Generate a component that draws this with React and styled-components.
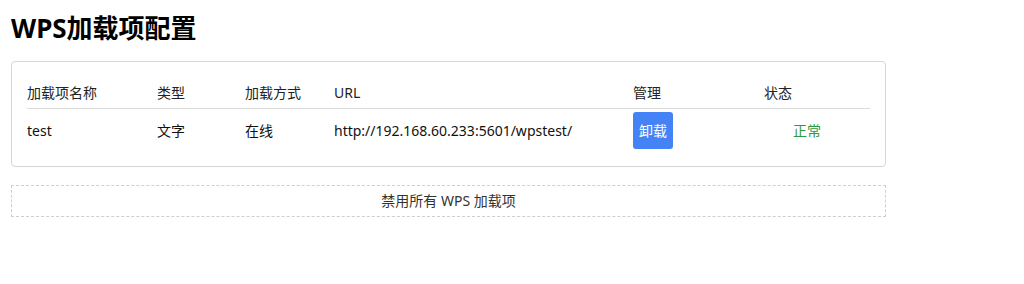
import React from "react";
import styled, { createGlobalStyle } from "styled-components";

const GlobalStyle = createGlobalStyle`
  body {
    margin: 0;
    background: #fff;
    color: #222;
    font-family: "Noto Sans", "Noto Sans CJK SC", sans-serif;
  }
`;

const columns = "130px 88px 89px 299px 131px 106px";

const addins = [
  { name: "test", type: "文字", mode: "在线", url: "http://192.168.60.233:5601/wpstest/", status: "正常" },
];

const Page = () => {
  return (
    <Wrapper>
      <GlobalStyle />
      <Title>WPS加载项配置</Title>
      <Card>
        <HeadRow>
          <HeadCell>加载项名称</HeadCell>
          <HeadCell>类型</HeadCell>
          <HeadCell>加载方式</HeadCell>
          <HeadCell>URL</HeadCell>
          <HeadCell>管理</HeadCell>
          <HeadCell>状态</HeadCell>
        </HeadRow>
        {addins.map((a) => (
          <BodyRow key={a.name}>
            <Cell>{a.name}</Cell>
            <Cell>{a.type}</Cell>
            <Cell>{a.mode}</Cell>
            <Cell>{a.url}</Cell>
            <Cell>
              <UnloadButton type="button">卸载</UnloadButton>
            </Cell>
            <Cell $status>{a.status}</Cell>
          </BodyRow>
        ))}
      </Card>
      <DisableAll type="button">禁用所有 WPS 加载项</DisableAll>
    </Wrapper>
  );
};

export default Page;

const Wrapper = styled.div`
  padding: 0 138px 0 11px;
  width: 875px;
`;

const Title = styled.h1`
  margin: 10px 0 15px;
  font-size: 26px;
  line-height: 36px;
  font-weight: 700;
  color: #000;
`;

const Card = styled.div`
  border: 1px solid #d6d6d6;
  border-radius: 4px;
  padding: 15px 15px 14px;
`;

const HeadRow = styled.div`
  display: grid;
  grid-template-columns: ${columns};
  height: 31px;
  border-bottom: 1px solid #dcdcdc;
`;

const BodyRow = styled.div`
  display: grid;
  grid-template-columns: ${columns};
  height: 43px;
`;

const HeadCell = styled.div`
  display: flex;
  align-items: center;
  font-size: 14px;
  line-height: 20px;
  color: #222;
`;

const Cell = styled.div`
  display: flex;
  align-items: center;
  font-size: 14px;
  line-height: 20px;
  color: ${(p) => (p.$status ? "#2f9a3c" : "#111")};
  padding-left: ${(p) => (p.$status ? "29px" : "0")};
`;

const UnloadButton = styled.button`
  width: 40px;
  height: 37px;
  padding: 0;
  border: none;
  border-radius: 3px;
  background-color: #4483f5;
  color: #fff;
  font-family: inherit;
  font-size: 14px;
  line-height: 20px;
`;

const DisableAll = styled.button`
  display: block;
  width: 875px;
  height: 32px;
  margin-top: 18px;
  padding: 0;
  border: 1px dashed #cfcfcf;
  background: #fff;
  color: #333;
  font-family: inherit;
  font-size: 14px;
  line-height: 20px;
`;
